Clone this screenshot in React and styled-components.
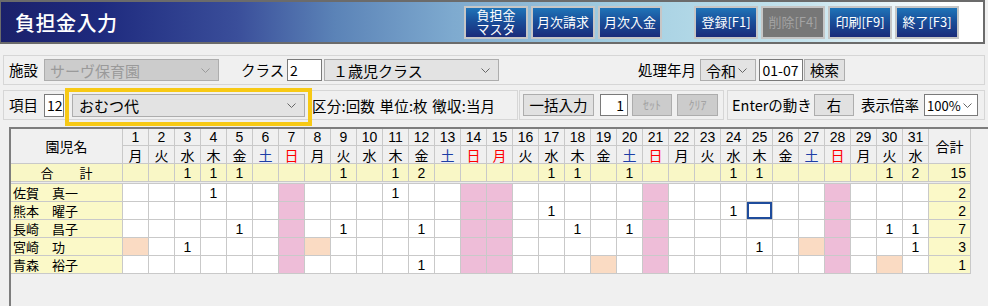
import React from "react";
import styled, { createGlobalStyle, css } from "styled-components";

const GlobalStyle = createGlobalStyle`
  html, body {
    margin: 0;
    padding: 0;
    background: #f0f0f0;
    overflow: hidden;
  }
  body {
    font-family: "Noto Sans CJK JP", "Noto Sans", sans-serif;
    color: #000;
  }
  * { box-sizing: border-box; }
`;

const WEEK = ["月", "火", "水", "木", "金", "土", "日"];
const HOLIDAYS = [15];
const days = Array.from({ length: 31 }, (_, i) => i + 1);
const weekdayOf = (d) => WEEK[(d - 1) % 7];
const isRedDay = (d) => weekdayOf(d) === "日" || HOLIDAYS.includes(d);

const kids = [
  { name: "佐賀　真一", vals: { 4: 1, 11: 1 }, peach: [] },
  { name: "熊本　曜子", vals: { 17: 1, 24: 1 }, peach: [], sel: 25 },
  { name: "長崎　昌子", vals: { 5: 1, 9: 1, 12: 1, 18: 1, 20: 1, 30: 1, 31: 1 }, peach: [] },
  { name: "宮崎　功", vals: { 3: 1, 25: 1, 31: 1 }, peach: [1, 8, 27] },
  { name: "青森　裕子", vals: { 12: 1 }, peach: [19, 30] },
];

const dayTotals = days.map((d) => kids.reduce((s, k) => s + (k.vals[d] || 0), 0));
const grandTotal = dayTotals.reduce((a, b) => a + b, 0);

const DIGITS = `"Liberation Sans", "Noto Sans CJK JP", sans-serif`;

const Screen = styled.div`
  width: 988px;
  height: 306px;
  display: flex;
  flex-direction: column;
`;

// title bar
const TitleBar = styled.header`
  width: 985px;
  height: 44px;
  border: 2px solid #6b6b6b;
  border-left-width: 1px;
  display: flex;
  align-items: center;
  padding: 0 24px 0 14px;
  background: linear-gradient(
    to right,
    #1b216b 0%,
    #1e2a7e 10%,
    #3a4e9a 24%,
    #5b83b7 34%,
    #7eaacf 46%,
    #a5d0e2 64%,
    #c6e4ee 82%,
    #ffffff 96%
  );
`;

const Title = styled.h1`
  margin: 0;
  font-size: 20px;
  font-weight: 500;
  color: #fff;
  letter-spacing: 0.5px;
  flex: 1;
`;

const ButtonGroup = styled.div`
  display: flex;
  gap: 3px;
  margin-left: ${(p) => p.$ml || 0}px;
`;

const HeadButton = styled.button`
  width: 64px;
  height: 33px;
  padding: 0;
  border: 2px solid #c6c6c6;
  font-family: inherit;
  font-size: 13px;
  line-height: 14px;
  color: #fff;
  background: linear-gradient(#1f74b8 0%, #1a4f9a 45%, #1a2b7a 100%);
  ${(p) =>
    p.disabled &&
    css`
      color: #a3a3a3;
      background: #777777;
    `}
`;

// filter panels
const Filters = styled.div`
  padding: 0 3px;
  margin-top: 11px;
  display: flex;
  flex-direction: column;
  gap: 5px;
`;

const PanelRow = styled.div`
  display: flex;
  gap: ${(p) => p.$gap || 0}px;
`;

const Panel = styled.div`
  height: 30px;
  width: ${(p) => (p.$w ? `${p.$w}px` : "auto")};
  flex: ${(p) => (p.$w ? "none" : 1)};
  margin-left: ${(p) => p.$ml || 0}px;
  border: 1px solid #d6d6d6;
  display: flex;
  align-items: center;
  padding-left: ${(p) => p.$pl ?? 4}px;
  font-size: 14.5px;
  white-space: nowrap;
`;

const Label = styled.span`
  display: inline-block;
  width: ${(p) => (p.$w ? `${p.$w}px` : "auto")};
  margin-left: ${(p) => p.$ml || 0}px;
  margin-right: ${(p) => p.$mr || 0}px;
  line-height: 20px;
`;

const Info = styled.span`
  margin-left: 7px;
  font-size: 14.5px;
  word-spacing: 1px;
  letter-spacing: 0.2px;
`;

const SelectBox = styled.div`
  position: relative;
  width: ${(p) => p.$w}px;
  height: ${(p) => p.$h || 22}px;
  margin-left: ${(p) => p.$ml || 0}px;
  border: 1px solid #adadad;
  background: ${(p) => (p.$disabled ? "#cccccc" : p.$white ? "#ffffff" : "#e3e3e3")};
  color: ${(p) => (p.$disabled ? "#9a9a9a" : "#000")};
  display: flex;
  align-items: center;
  padding-left: ${(p) => p.$pl ?? 5}px;
  font-size: ${(p) => p.$fs || 15}px;
  ${(p) => p.$white && css`border-color: #7a7a7a;`}
`;

const Chevron = styled.svg`
  position: absolute;
  right: ${(p) => p.$r}px;
  top: 50%;
  margin-top: -2px;
`;

const Highlight = styled.div`
  position: relative;
  margin-left: ${(p) => p.$ml || 0}px;
  &::after {
    content: "";
    position: absolute;
    top: -6px;
    bottom: -9px;
    left: -7px;
    right: -7px;
    border: 4px solid #f7c915;
    pointer-events: none;
  }
`;

const TextInput = styled.div`
  width: ${(p) => p.$w}px;
  height: ${(p) => p.$h || 22}px;
  margin-left: ${(p) => p.$ml || 0}px;
  border: 1px solid #7a7a7a;
  background: #fff;
  display: flex;
  align-items: center;
  justify-content: ${(p) => p.$align || "flex-start"};
  padding: 0 3px 0 2px;
  font-size: 14px;
`;

const FormButton = styled.button`
  width: ${(p) => p.$w}px;
  height: 22px;
  margin-left: ${(p) => p.$ml || 0}px;
  padding: 0;
  border: 1px solid #adadad;
  background: ${(p) => (p.disabled ? "#cccccc" : "#e1e1e1")};
  color: ${(p) => (p.disabled ? "#a3a3a3" : "#000")};
  font-family: inherit;
  font-size: ${(p) => p.$fs || 14.5}px;
  line-height: 20px;
`;

// grid
const TableWrap = styled.div`
  flex: 1;
  margin: 7px 0 0 9px;
  border-top: 2px solid #7d7d7d;
  border-left: 2px solid #7d7d7d;
`;

const Grid = styled.div`
  display: inline-grid;
  grid-template-columns: 111px repeat(31, 25px) 41px;
  grid-template-rows: 16px 17px 17px 1px repeat(5, 17px);
  gap: 1px;
  background: #c9c9c9;
  padding: 0 1px 1px 0;
  font-size: 13px;
`;

const cellBase = css`
  display: flex;
  align-items: center;
  line-height: 1;
  white-space: nowrap;
  overflow: hidden;
`;

const HeadCell = styled.div`
  ${cellBase};
  background: #f0f0f0;
  justify-content: center;
  color: ${(p) => p.$color || "#000"};
  font-size: ${(p) => p.$fs || 13}px;
  ${(p) => p.$digits && css`font-family: ${DIGITS}; font-size: 14px;`}
  grid-row: ${(p) => p.$row || "auto"};
  grid-column: ${(p) => p.$col || "auto"};
`;

const TotalCell = styled.div`
  ${cellBase};
  background: #f9f7c6;
  justify-content: ${(p) => p.$align || "center"};
  padding-right: ${(p) => (p.$align === "flex-end" ? 4 : 0)}px;
  ${(p) => p.$digits && css`font-family: ${DIGITS}; font-size: 14px;`}
`;

const Separator = styled.div`
  grid-column: 1 / -1;
  background: #ececec;
`;

const NameCell = styled.div`
  ${cellBase};
  background: #fbf9c8;
  padding-left: 2px;
`;

const DataCell = styled.div`
  ${cellBase};
  justify-content: center;
  font-family: ${DIGITS};
  font-size: 14px;
  background: ${(p) => (p.$kind === "holiday" ? "#eebdd8" : p.$kind === "peach" ? "#fadbc3" : "#ffffff")};
  ${(p) => p.$selected && css`box-shadow: inset 0 0 0 2px #1f4c9c;`}
`;

const SumCell = styled.div`
  ${cellBase};
  background: #fbf9c8;
  justify-content: flex-end;
  padding-right: 4px;
  font-family: ${DIGITS};
  font-size: 14px;
`;

const ChevronIcon = ({ color = "#666", right = 8 }) => (
  <Chevron $r={right} width="9" height="5" viewBox="0 0 9 5">
    <path d="M0.5 0.5 L4.5 4.5 L8.5 0.5" fill="none" stroke={color} strokeWidth="1" />
  </Chevron>
);

const Select = ({ children, chevronRight, ...rest }) => (
  <SelectBox {...rest}>
    {children}
    <ChevronIcon color={rest.$disabled ? "#9a9a9a" : "#666"} right={chevronRight ?? 8} />
  </SelectBox>
);

const dayColor = (d) => (isRedDay(d) ? "#ff0000" : weekdayOf(d) === "土" ? "#1d3ea6" : "#000");

export default function App() {
  return (
    <Screen>
      <GlobalStyle />
      <TitleBar>
        <Title>負担金入力</Title>
        <ButtonGroup>
          <HeadButton>
            負担金
            <br />
            マスタ
          </HeadButton>
          <HeadButton>月次請求</HeadButton>
          <HeadButton>月次入金</HeadButton>
        </ButtonGroup>
        <ButtonGroup $ml={32}>
          <HeadButton>登録[F1]</HeadButton>
          <HeadButton disabled>削除[F4]</HeadButton>
          <HeadButton>印刷[F9]</HeadButton>
          <HeadButton>終了[F3]</HeadButton>
        </ButtonGroup>
      </TitleBar>

      <Filters>
        <PanelRow>
          <Panel>
            <Label $w={35} $ml={1}>施設</Label>
            <Select $w={175} $disabled>サーヴ保育園</Select>
            <Label $w={46} $ml={22}>クラス</Label>
            <TextInput $w={35}>2</TextInput>
            <Select $w={175} $ml={2} $pl={8}>１歳児クラス</Select>
            <Label $w={62} $ml={139}>処理年月</Label>
            <Select $w={56} $pl={5}>令和</Select>
            <TextInput $w={44} $ml={3} $align="center">01-07</TextInput>
            <FormButton $w={41} $ml={1}>検索</FormButton>
          </Panel>
        </PanelRow>
        <PanelRow $gap={1}>
          <Panel $w={515}>
            <Label $w={35} $ml={1}>項目</Label>
            <TextInput $w={20} $h={23}>12</TextInput>
            <Highlight $ml={8}>
              <Select $w={233} $h={23} $pl={6}>おむつ代</Select>
            </Highlight>
            <Info>区分:回数 単位:枚 徴収:当月</Info>
          </Panel>
          <Panel $w={205} $pl={3}>
            <FormButton $w={71}>一括入力</FormButton>
            <TextInput $w={28} $ml={6} $align="flex-end">1</TextInput>
            <FormButton $w={40} $ml={4} $fs={12} disabled>ｾｯﾄ</FormButton>
            <FormButton $w={41} $ml={5} $fs={12} disabled>ｸﾘｱ</FormButton>
          </Panel>
          <Panel $pl={4} $ml={2}>
            <Label $w={82}>Enterの動き</Label>
            <FormButton $w={40}>右</FormButton>
            <Label $w={63} $ml={7}>表示倍率</Label>
            <Select $w={54} $white $pl={2} $fs={13} chevronRight={5}>100%</Select>
          </Panel>
        </PanelRow>
      </Filters>

      <TableWrap>
        <Grid>
          <HeadCell $row="1 / span 2" $col="1" $fs={14}>園児名</HeadCell>
          {days.map((d) => (
            <HeadCell key={`n${d}`} $row="1" $digits>{d}</HeadCell>
          ))}
          <HeadCell $row="1 / span 2" $col="33" $fs={14}>合計</HeadCell>
          {days.map((d) => (
            <HeadCell key={`w${d}`} $row="2" $fs={14} $color={dayColor(d)}>
              {weekdayOf(d)}
            </HeadCell>
          ))}

          <TotalCell>合　　計</TotalCell>
          {dayTotals.map((t, i) => (
            <TotalCell key={`t${i}`} $digits>{t || ""}</TotalCell>
          ))}
          <TotalCell $align="flex-end" $digits>{grandTotal}</TotalCell>

          <Separator />

          {kids.map((k) => {
            const sum = Object.values(k.vals).reduce((a, b) => a + b, 0);
            return (
              <React.Fragment key={k.name}>
                <NameCell>{k.name}</NameCell>
                {days.map((d) => (
                  <DataCell
                    key={d}
                    $kind={isRedDay(d) ? "holiday" : k.peach.includes(d) ? "peach" : "plain"}
                    $selected={k.sel === d}
                  >
                    {k.vals[d] || ""}
                  </DataCell>
                ))}
                <SumCell>{sum}</SumCell>
              </React.Fragment>
            );
          })}
        </Grid>
      </TableWrap>
    </Screen>
  );
}
